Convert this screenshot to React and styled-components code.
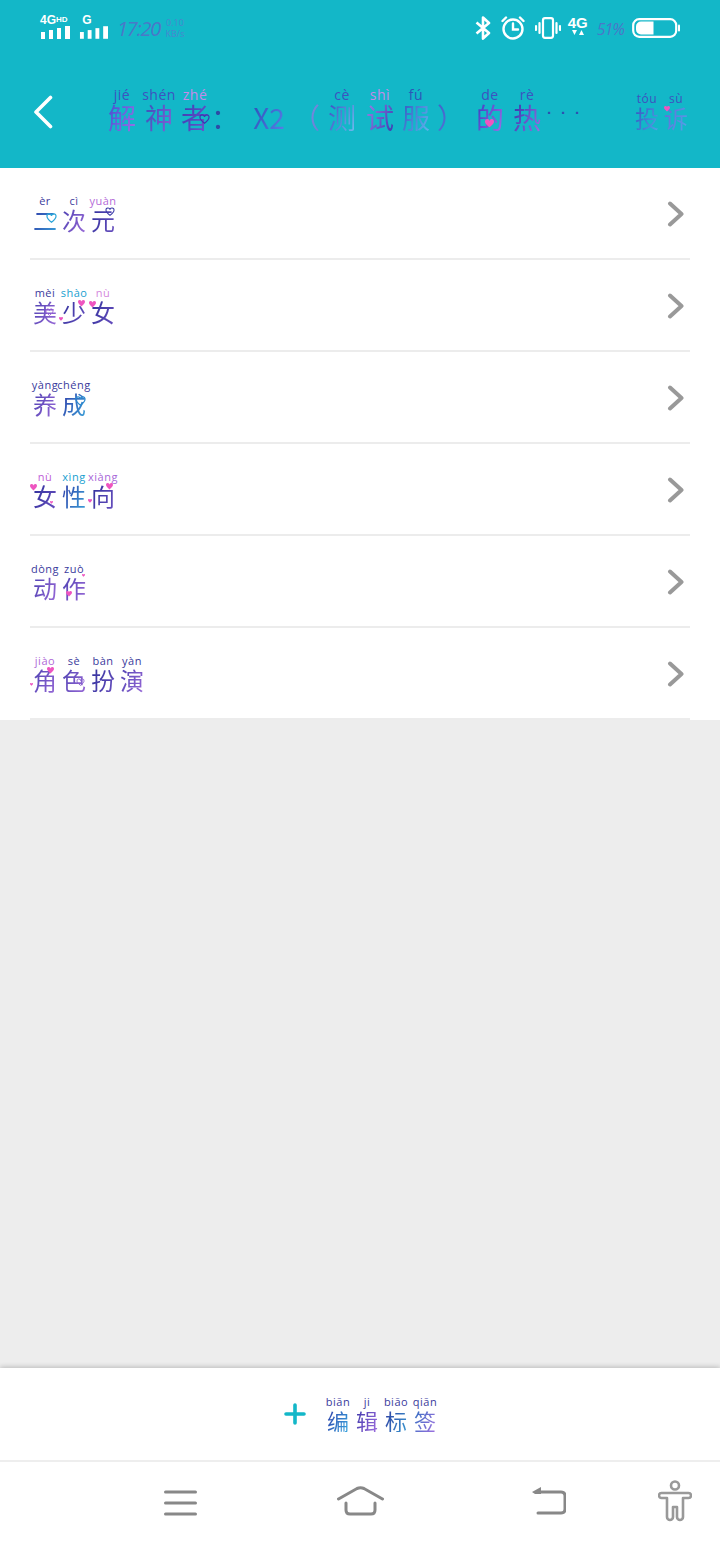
import React from "react";
import styled, { createGlobalStyle } from "styled-components";

const Global = createGlobalStyle`
  html, body { margin: 0; padding: 0; background: #ededed; }
  #root { width: 720px; height: 1544px; }
`;
const Page = styled.div`
  width: 720px; height: 1544px; display: flex; flex-direction: column; background: #ededed; overflow: hidden;
  font-family: "Noto Sans CJK SC", "Noto Sans", sans-serif;
`;
const Top = styled.header`background: #13b7c8; height: 168px; display: flex; flex-direction: column;`;
const StatusBar = styled.div`height: 56px; padding: 14px 40px 0 40px; box-sizing: border-box; display: flex; justify-content: space-between;`;
const StatusSide = styled.div`display: flex; align-items: flex-start;`;
const Network = styled.div`display: flex; flex-direction: column; width: ${p => p.$w}px; color: #fff; font: 700 12px/12px "Liberation Sans", sans-serif; sup{font-size:8px;line-height:8px;vertical-align:2px;}`;
const Time = styled.span`font: italic 400 20px/30px "Open Sans", sans-serif; letter-spacing: -1.2px; color: #4a78c8; margin-left: 9px; width: 48px;`;
const Speed = styled.span`font: 400 9px/11px "Open Sans", sans-serif; color: #4a86cf; width: 20px; padding-top: 3px; text-align: center;`;
const Percent = styled.span`font: italic 400 16px/30px "Open Sans", sans-serif; letter-spacing: -1px; color: #4a78c8; margin: 0 8px 0 8px;`;
const FourG = styled.div`display: flex; flex-direction: column; align-items: center; color: #fff; font: 700 15px/14px "Liberation Sans", sans-serif; width: 22px; margin-left: 6px; padding-top: 2px;`;
const IconSlot = styled.span`display: block; margin-left: ${p => p.$ml || 0}px; margin-top: ${p => p.$mt || 0}px; line-height: 0;`;

const TitleBar = styled.div`height: 112px; display: flex; align-items: flex-start; padding: 26px 32px 0 32px; box-sizing: border-box;`;
const Back = styled.span`display: block; margin-top: 13px; width: 76px; line-height: 0;`;
const TitleText = styled.div`flex: 1; display: flex; align-items: flex-end; height: 50px;`;
const Report = styled.div`display: flex; gap: 5px; margin-top: 10px; height: 44px;`;

const Cell = styled.span`display: flex; flex-direction: column; align-items: center; position: relative; flex: none; width: ${p => p.$w}px; margin-right: ${p => p.$gap || 0}px;`;
const Pinyin = styled.span`
  font: 400 ${p => p.$size}px/${p => p.$size + 1}px "Open Sans", sans-serif; white-space: nowrap; color: ${p => p.$c}; letter-spacing: .5px;
  height: ${p => p.$size + 1}px;
`;
const Han = styled.span`
  font: 400 ${p => p.$size}px/${p => p.$size + 2}px "Noto Sans CJK SC", sans-serif;
  background: linear-gradient(115deg, ${p => p.$from}, ${p => p.$to});
  -webkit-background-clip: text; background-clip: text; color: transparent; white-space: nowrap;
`;
const HeartMark = styled.svg`position: absolute; left: ${p => p.$x}px; top: ${p => p.$y}px; overflow: visible;`;

function Heart({ x, y, s = 6, c = "#ee55c0", line }) {
  return (
    <HeartMark $x={x} $y={y - 2} width={s} height={s} viewBox="0 0 12 12">
      <path d="M6 11 C1 7 0 5 0 3.2 A3 3 0 0 1 6 2.6 A3 3 0 0 1 12 3.2 C12 5 11 7 6 11Z"
        fill={line ? "none" : c} stroke={line ? c : "none"} strokeWidth={line ? 1.6 : 0} />
    </HeartMark>
  );
}

function Ruby({ py, zh, pc = "#3a3a9c", from = "#3b3ba8", to = "#8e62d0", w, gap, ps, hs, hearts = [] }) {
  return (
    <Cell $w={w} $gap={gap}>
      <Pinyin $size={ps} $c={pc}>{py}</Pinyin>
      <Han $size={hs} $from={from} $to={to}>{zh}</Han>
      {hearts.map((h, i) => <Heart key={i} {...h} />)}
    </Cell>
  );
}

const Rows = styled.main`background: #fff; height: 552px; display: flex; flex-direction: column;`;
const Row = styled.div`
  height: 92px; box-sizing: border-box; margin: 0 30px; border-bottom: 2px solid #ececec;
  display: flex; align-items: flex-start; justify-content: space-between; padding: 27px 5px 0 0;
`;
const Label = styled.div`display: flex; gap: 5px; margin-left: 3px;`;
const Chevron = styled.span`display: block; line-height: 0; margin-top: 6px;`;
const Spacer = styled.div`flex: 1;`;
const EditBar = styled.div`
  height: 94px; background: #fff; box-shadow: 0 -1px 5px rgba(0,0,0,.22); box-sizing: border-box;
  border-bottom: 2px solid #eeeeee; display: flex; align-items: flex-start; justify-content: center; padding: 28px 0 0 0; gap: 21px;
`;
const Plus = styled.span`display: block; line-height: 0; margin-top: 7px;`;
const EditLabel = styled.div`display: flex; gap: 7px;`;
const Nav = styled.nav`height: 82px; background: #fff; display: flex; align-items: flex-start; padding-left: 164px;`;
const NavIcon = styled.span`display: block; line-height: 0; margin-left: ${p => p.$ml}px; margin-top: ${p => p.$mt}px;`;
const Dots = styled.span`font: 700 15px/24px "Liberation Sans", sans-serif; letter-spacing: 9px; color: #2f4fb0; margin: 0 0 7px 6px;`;

const V = { from: "#4a3fb0", to: "#9a6ad8" };
const D = { from: "#2d2f9a", to: "#6a50c0" };
const C = { from: "#2f3aa8", to: "#3aa0d8" };
const L = { w: 24, ps: 11, hs: 24 };

const items = [
  [
    { py: "èr", zh: "二", ...C, hearts: [{ x: 14, y: 21, s: 9, c: "#2ba5d8", line: true }] },
    { py: "cì", zh: "次", ...V },
    { py: "yuàn", zh: "元", pc: "#b46ad8", ...D, hearts: [{ x: 15, y: 15, s: 8, c: "#3b3ba8", line: true }] },
  ],
  [
    { py: "mèi", zh: "美", ...V, hearts: [{ x: 13, y: 24, s: 7, c: "#a060d8", line: true }] },
    { py: "shào", zh: "少", pc: "#18a0d0", ...D, hearts: [{ x: 16, y: 15, s: 7 }, { x: -3, y: 32, s: 4 }] },
    { py: "nù", zh: "女", pc: "#d488dc", ...D, hearts: [{ x: -2, y: 16, s: 7 }] },
  ],
  [
    { py: "yàng", zh: "养", ...V },
    { py: "chéng", zh: "成", ...C, hearts: [{ x: 14, y: 20, s: 9, c: "#2b8ad0", line: true }] },
  ],
  [
    { py: "nù", zh: "女", pc: "#c060d8", ...D, hearts: [{ x: -3, y: 15, s: 7 }, { x: 17, y: 32, s: 3 }] },
    { py: "xìng", zh: "性", pc: "#18a0d0", ...C },
    { py: "xiàng", zh: "向", pc: "#a868d8", ...D, hearts: [{ x: 15, y: 14, s: 7 }, { x: -3, y: 30, s: 4 }] },
  ],
  [
    { py: "dòng", zh: "动", ...V },
    { py: "zuò", zh: "作", ...V, hearts: [{ x: 4, y: 30, s: 6 }, { x: 20, y: 13, s: 3 }] },
  ],
  [
    { py: "jiào", zh: "角", pc: "#b06ad8", ...V, hearts: [{ x: 14, y: 14, s: 7 }, { x: -3, y: 30, s: 3 }] },
    { py: "sè", zh: "色", ...V, hearts: [{ x: 15, y: 26, s: 7, c: "#8a60d0", line: true }] },
    { py: "bàn", zh: "扮", ...D },
    { py: "yàn", zh: "演", ...V },
  ],
];

const title = [
  { py: "jié", zh: "解", w: 28, gap: 9, pc: "#3d52c0", from: "#3f50d0", to: "#a070e8" },
  { py: "shén", zh: "神", w: 28, gap: 8, pc: "#3d52c0", from: "#3550b8", to: "#8a60d8" },
  { py: "zhé", zh: "者", w: 28, gap: 2, pc: "#c58ae8", from: "#3a3ab0", to: "#7058d0", hearts: [{ x: 19, y: 30, s: 9, c: "#3a3ab0", line: true }] },
  { py: "", zh: "：", w: 28, gap: 13, from: "#2a4aa0", to: "#3050b0" },
  { py: "", zh: "X2", w: 34, gap: 6, from: "#2c50b8", to: "#5a80e8" },
  { py: "", zh: "（", w: 28, gap: 8, from: "#8090e0", to: "#6a80d8" },
  { py: "cè", zh: "测", w: 28, gap: 10, pc: "#3d52c0", from: "#3a4ac0", to: "#70c0f0" },
  { py: "shì", zh: "试", w: 28, gap: 8, pc: "#c58ae8", from: "#a080e8", to: "#3a3ab0" },
  { py: "fú", zh: "服", w: 28, gap: 7, pc: "#2d55b8", from: "#3458c0", to: "#60b8f0" },
  { py: "", zh: "）", w: 28, gap: 11, from: "#4060c8", to: "#6080e0" },
  { py: "de", zh: "的", w: 28, gap: 9, pc: "#3d52c0", from: "#3a3ac0", to: "#a070e8", hearts: [{ x: 9, y: 34, s: 9 }] },
  { py: "rè", zh: "热", w: 28, gap: 0, pc: "#3d52c0", from: "#2d35a8", to: "#a070e8" },
];

const edit = [
  { py: "biān", zh: "编", from: "#2e3aa8", to: "#38a8e0" },
  { py: "ji", zh: "辑", from: "#3a35a8", to: "#a070e0" },
  { py: "biāo", zh: "标", from: "#2d3aa0", to: "#3a98d0" },
  { py: "qiān", zh: "签", from: "#3070c0", to: "#a070e0" },
];

const Signal = ({ w }) => (
  <svg width={w} height="13" viewBox="0 0 30 13" fill="#fff">
    <rect x="1" y="6" width="4" height="7" /><rect x="9" y="4" width="4" height="9" />
    <rect x="17" y="2" width="4" height="11" /><rect x="25" y="0" width="5" height="13" />
  </svg>
);

export default function App() {
  return (
    <Page>
      <Global />
      <Top>
        <StatusBar>
          <StatusSide>
            <Network $w={39}>
              <span>4G<sup>HD</sup></span>
              <Signal w={30} />
            </Network>
            <Network $w={29}>
              <span>&nbsp;G</span>
              <Signal w={29} />
            </Network>
            <Time>17:20</Time>
            <Speed>0.10<br />KB/s</Speed>
          </StatusSide>
          <StatusSide>
            <IconSlot $mt={2}>
              <svg width="16" height="24" viewBox="0 0 16 24" fill="none" stroke="#fff" strokeWidth="2.6" strokeLinejoin="round">
                <path d="M1.5 6.5 L14 17 L8 22.5 V1.5 L14 7 L1.5 17.5" />
              </svg>
            </IconSlot>
            <IconSlot $ml={10} $mt={2}>
              <svg width="24" height="24" viewBox="0 0 24 24" fill="none" stroke="#fff" strokeWidth="2.4" strokeLinecap="round">
                <circle cx="12" cy="13" r="9.5" /><path d="M12 7.5 V13.5 H17" />
                <path d="M1.5 5 L5 1.5 M22.5 5 L19 1.5" />
              </svg>
            </IconSlot>
            <IconSlot $ml={10} $mt={3}>
              <svg width="26" height="22" viewBox="0 0 26 22" fill="none" stroke="#fff" strokeWidth="2.2" strokeLinecap="round">
                <rect x="8" y="1.2" width="10" height="19.6" rx="2" />
                <path d="M4.5 6 V16 M1 9 V13 M21.5 6 V16 M25 9 V13" />
              </svg>
            </IconSlot>
            <FourG>
              4G
              <svg width="12" height="6" viewBox="0 0 12 6" fill="#fff"><path d="M0 0 H5 L2.5 5Z M7 5 H12 L9.5 0Z" /></svg>
            </FourG>
            <Percent>51%</Percent>
            <IconSlot $mt={4}>
              <svg width="48" height="20" viewBox="0 0 48 20" fill="none">
                <rect x="1.2" y="1.2" width="43" height="17.6" rx="6" stroke="#fff" strokeWidth="2.2" />
                <path d="M9 3.5 H21.5 V16.5 H9 A5 5 0 0 1 4 11.500 V8.500 A5 5 0 0 1 9 3.5Z" fill="#fff" />
                <rect x="46" y="6.5" width="2" height="7" rx="1" fill="#fff" />
              </svg>
            </IconSlot>
          </StatusSide>
        </StatusBar>
        <TitleBar>
          <Back>
            <svg width="22" height="34" viewBox="0 0 22 34" fill="none" stroke="#fff" strokeWidth="3.6" strokeLinecap="round" strokeLinejoin="round">
              <path d="M18.5 2.5 L4 17 L18.5 31.5" />
            </svg>
          </Back>
          <TitleText>
            {title.map((t, i) => <Ruby key={i} ps={14} hs={28} {...t} />)}
            <Dots>···</Dots>
          </TitleText>
          <Report>
            <Ruby py="tóu" zh="投" w={24} ps={12} hs={24} pc="#3d52c0" from="#3550c0" to="#50a8e8" />
            <Ruby py="sù" zh="诉" w={24} ps={12} hs={24} pc="#3d52c0" from="#6a60d8" to="#50a8e8" hearts={[{ x: 0, y: 16, s: 6 }]} />
          </Report>
        </TitleBar>
      </Top>
      <Rows>
        {items.map((row, i) => (
          <Row key={i}>
            <Label>{row.map((c, j) => <Ruby key={j} {...L} {...c} />)}</Label>
            <Chevron>
              <svg width="18" height="26" viewBox="0 0 18 26" fill="none" stroke="#999" strokeWidth="4" strokeLinecap="round" strokeLinejoin="round">
                <path d="M3 2.5 L14.5 13 L3 23.5" />
              </svg>
            </Chevron>
          </Row>
        ))}
      </Rows>
      <Spacer />
      <EditBar>
        <Plus>
          <svg width="22" height="22" viewBox="0 0 22 22" stroke="#13b7c8" strokeWidth="3.6" strokeLinecap="round">
            <path d="M2 11 H20 M11 2 V20" />
          </svg>
        </Plus>
        <EditLabel>
          {edit.map((c, i) => <Ruby key={i} w={22} ps={11} hs={22} pc="#3a3a9c" {...c} />)}
        </EditLabel>
      </EditBar>
      <Nav>
        <NavIcon $ml={0} $mt={28}>
          <svg width="33" height="26" viewBox="0 0 33 26" stroke="#888" strokeWidth="3" strokeLinecap="round">
            <path d="M1.5 2 H31.5 M1.5 13 H31.5 M1.5 24 H31.5" />
          </svg>
        </NavIcon>
        <NavIcon $ml={140} $mt={24}>
          <svg width="47" height="30" viewBox="0 0 47 30" fill="none" stroke="#888" strokeWidth="3" strokeLinecap="round">
            <path d="M1.5 13 L20 2.5 Q23.5 1 27 2.5 L45.5 13" />
            <path d="M9 17 V24 Q9 28 13 28 H34 Q38 28 38 24 V17" />
          </svg>
        </NavIcon>
        <NavIcon $ml={148} $mt={25}>
          <svg width="34" height="28" viewBox="0 0 34 28" fill="none" stroke="#888" strokeWidth="3" strokeLinecap="round">
            <path d="M8 5 H29 Q33 5 33 9 V22 Q33 26 29 26 H6" />
            <path d="M0 5 L9 0 V7 H3Z" fill="#888" stroke="none" />
          </svg>
        </NavIcon>
        <NavIcon $ml={92} $mt={18}>
          <svg width="34" height="42" viewBox="0 0 34 42" fill="none" stroke="#999" strokeWidth="2.6" strokeLinejoin="round">
            <circle cx="17" cy="5.5" r="4" />
            <path d="M3.5 13 H30.5 A2.5 2.5 0 0 1 30.5 18 H25 V37 A3 3 0 0 1 19 37 V27 H15 V37 A3 3 0 0 1 9 37 V18 H3.5 A2.5 2.5 0 0 1 3.5 13Z" />
          </svg>
        </NavIcon>
      </Nav>
    </Page>
  );
}
